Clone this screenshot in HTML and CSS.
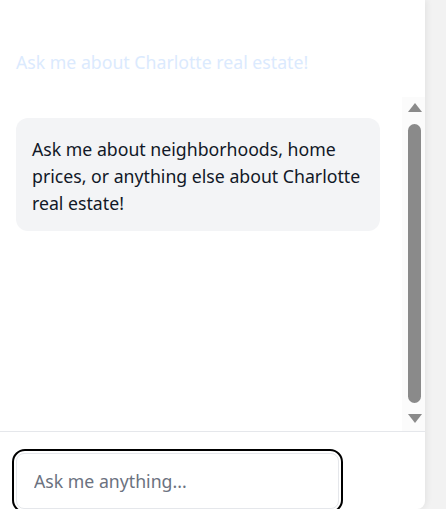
FILE: index.html
```html
<!DOCTYPE html>
<html>
<head>
<meta charset="utf-8">
<link rel="stylesheet" href="styles.css">
</head>
<body>
<div class="panel">
  <div class="header">Ask me about Charlotte real estate!</div>
  <div class="body">
    <div class="messages">
      <div class="bubble">Ask me about neighborhoods, home prices, or anything else about Charlotte real estate!</div>
    </div>
    <div class="scrollbar">
      <div class="arrow up"></div>
      <div class="thumb"></div>
      <div class="arrow down"></div>
    </div>
  </div>
  <div class="footer">
    <div class="input-wrap">
      <input class="input" type="text" placeholder="Ask me anything...">
    </div>
  </div>
</div>
</body>
</html>
```
FILE: styles.css
```css
html, body {
  margin: 0;
  padding: 0;
  height: 100%;
  overflow: hidden;
}
body {
  background: #f2f2f2;
  font-family: "Segoe UI", "Noto Sans", sans-serif;
}
.panel {
  width: 425px;
  height: 509px;
  background: #ffffff;
  display: flex;
  flex-direction: column;
  border-bottom-right-radius: 8px;
  box-shadow: 2px 0 6px rgba(0,0,0,0.06);
}
.header {
  height: 97px;
  flex: none;
  box-sizing: border-box;
  padding: 50px 16px 0;
  font-size: 17.7px;
  line-height: 24px;
  color: #dbeafe;
}
.body {
  flex: 1;
  display: flex;
  min-height: 0;
}
.messages {
  flex: 1;
  padding: 21px 22px 0 16px;
}
.bubble {
  background: #f3f4f6;
  border-radius: 12px;
  padding: 18px 16px 14px;
  font-size: 17.7px;
  line-height: 27px;
  color: #111827;
}
.scrollbar {
  width: 23px;
  background: #fbfbfb;
  display: flex;
  flex-direction: column;
  align-items: center;
  padding: 6px 0 8px;
  box-sizing: border-box;
}
.arrow {
  width: 0;
  height: 0;
  border-left: 7px solid transparent;
  border-right: 7px solid transparent;
  margin-left: 2px;
  flex: none;
}
.arrow.up { border-bottom: 9px solid #8a8a8a; margin-bottom: 12px; }
.arrow.down { border-top: 9px solid #8a8a8a; margin-top: 11px; }
.thumb {
  flex: 1;
  width: 13px;
  margin-left: 2px;
  background: #8a8a8a;
  border-radius: 7px;
}
.footer {
  border-top: 1px solid #e5e7eb;
  padding: 21px 16px 0;
  flex: none;
  height: 78px;
  box-sizing: border-box;
}
.input-wrap {
  width: 323px;
  outline: 2px solid #000;
  outline-offset: 2px;
  border-radius: 9px;
}
.input {
  display: block;
  width: 100%;
  box-sizing: border-box;
  height: 56px;
  border: 1px solid #e5e7eb;
  border-radius: 8px;
  padding: 0 17px;
  font-family: "Segoe UI", "Noto Sans", sans-serif;
  font-size: 17.7px;
  color: #111827;
  background: #fff;
}
.input::placeholder {
  color: #6b7280;
}
.input:focus { outline: none; }
```
